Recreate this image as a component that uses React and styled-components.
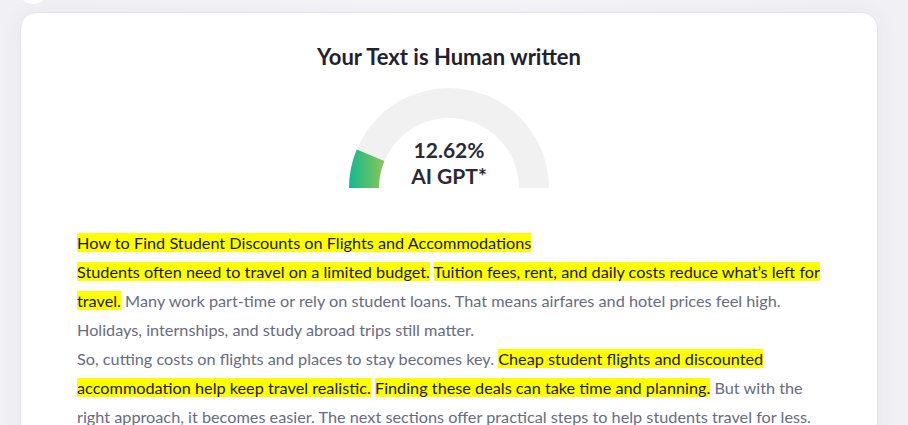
import React from "react";
import styled, { createGlobalStyle } from "styled-components";

const Global = createGlobalStyle`
  html, body { margin: 0; padding: 0; background: #f3f3f7; }
  body { font-family: Lato, "Noto Sans", sans-serif; overflow: hidden; }
`;

const Page = styled.div`
  position: relative;
  padding: 12px 30px 0 20px;
  height: 425px;
  overflow: hidden;
  box-sizing: border-box;
  background: linear-gradient(90deg, #f1f1f5 0%, #f6f6f9 50%, #f1f1f5 100%);
`;

const Blob = styled.div`
  position: absolute;
  left: 18px;
  top: -26px;
  width: 30px;
  height: 30px;
  border-radius: 50%;
  background: #ffffff;
`;

const Card = styled.div`
  background: #ffffff;
  border: 1px solid #e2e2f2;
  border-radius: 16px;
  box-shadow: 0 0 24px rgba(40, 40, 80, 0.05);
  padding: 30px 40px 40px 56px;
  min-height: 500px;
  box-sizing: border-box;
`;

const Title = styled.h2`
  margin: 0 0 0 -16px;
  text-align: center;
  font-size: 22px;
  line-height: 28px;
  font-weight: 700;
  color: #22222d;
`;

const GaugeWrap = styled.div`
  position: relative;
  width: 200px;
  height: 100px;
  margin: 17px auto 0;
  left: -8px;
`;

const GaugeLabel = styled.div`
  position: absolute;
  left: 0;
  right: 0;
  top: 49px;
  text-align: center;
  font-size: 21px;
  line-height: 26px;
  font-weight: 700;
  color: #2a2a36;
`;

const Body = styled.div`
  margin-top: 40px;
  font-size: 16.25px;
  line-height: 29px;
  color: #676b84;
  width: 790px;
`;

const Mark = styled.span`
  background: #ffff00;
  color: #1a1a1a;
`;

function Gauge() {
  return (
    <GaugeWrap>
      <svg width="200" height="100" viewBox="0 0 200 100">
        <defs>
          <linearGradient id="g" x1="0" y1="0" x2="36" y2="0" gradientUnits="userSpaceOnUse">
            <stop offset="0" stopColor="#12b892" />
            <stop offset="1" stopColor="#8cc752" />
          </linearGradient>
        </defs>
        <path d="M0 100 A100 100 0 0 1 200 100 L170 100 A70 70 0 0 0 30 100 Z" fill="#f1f1f1" />
        <path d="M0 100 A100 100 0 0 1 7.75 61.41 L35.42 72.99 A70 70 0 0 0 30 100 Z" fill="url(#g)" />
      </svg>
      <GaugeLabel>
        12.62%
        <br />
        AI GPT*
      </GaugeLabel>
    </GaugeWrap>
  );
}

export default function App() {
  return (
    <>
      <Global />
      <Page>
        <Blob />
        <Card>
          <Title>Your Text is Human written</Title>
          <Gauge />
          <Body>
            <Mark>How to Find Student Discounts on Flights and Accommodations</Mark>
            <br />
            <Mark>Students often need to travel on a limited budget.</Mark>{" "}
            <Mark>Tuition fees, rent, and daily costs reduce what’s left for </Mark>
            <br />
            <Mark>travel.</Mark> Many work part-time or rely on student loans. That means airfares and hotel prices feel high.
            <br />
            Holidays, internships, and study abroad trips still matter.
            <br />
            So, cutting costs on flights and places to stay becomes key.{" "}
            <Mark>Cheap student flights and discounted </Mark>
            <br />
            <Mark>accommodation help keep travel realistic.</Mark>{" "}
            <Mark>Finding these deals can take time and planning.</Mark> But with the
            <br />
            right approach, it becomes easier. The next sections offer practical steps to help students travel for less.
          </Body>
        </Card>
      </Page>
    </>
  );
}
